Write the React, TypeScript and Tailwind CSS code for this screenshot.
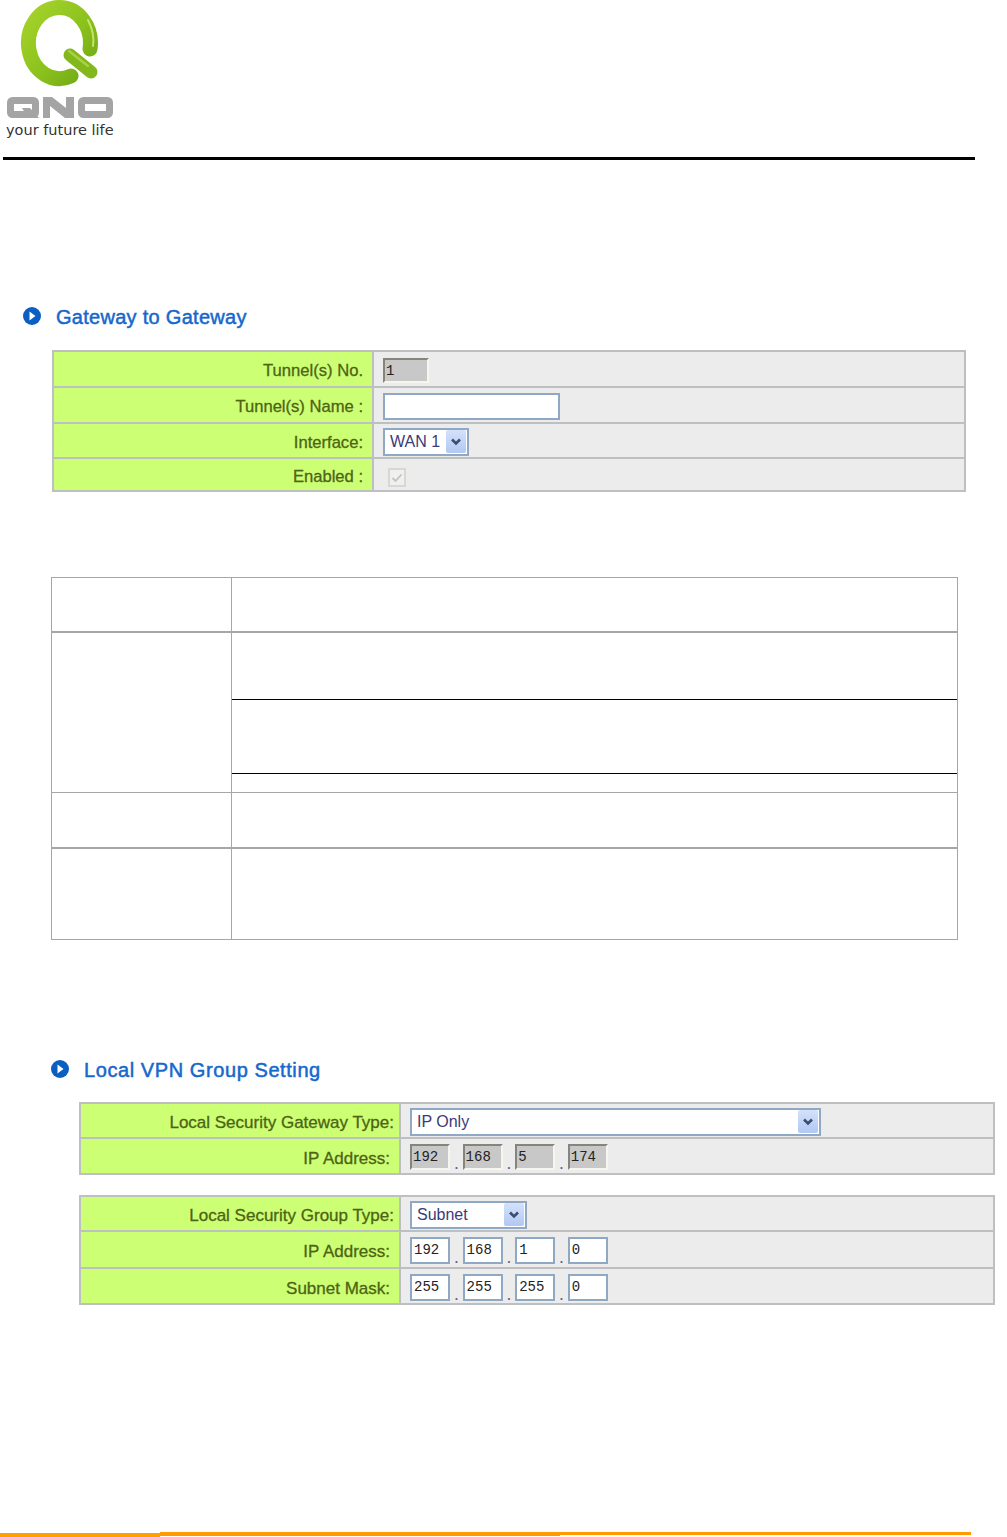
import type { ReactNode } from "react";

const sans = "font-['Liberation_Sans',Arial,sans-serif]";

const Logo = () => (
  <div className="h-[140px] shrink-0">
    <svg width="120" height="120" viewBox="0 0 120 120" className="block">
      <defs>
        <linearGradient id="ring" x1="0" y1="0" x2="1" y2="1">
          <stop offset="0" stopColor="#a6d22c" />
          <stop offset="0.55" stopColor="#8cc21c" />
          <stop offset="1" stopColor="#6fa816" />
        </linearGradient>
      </defs>
      <path d="M90 49 A31 35.5 0 1 0 71 76" fill="none" stroke="url(#ring)" strokeWidth="15" strokeLinecap="round" />
      <path d="M88 20 Q95 34 93 46" fill="none" stroke="#c5e26c" strokeWidth="2" strokeLinecap="round" />
      <path d="M70 55 L91 72" fill="none" stroke="#82b81c" strokeWidth="13" strokeLinecap="round" />
      <path d="M69 51 L88 66" fill="none" stroke="#a9d243" strokeWidth="2.5" strokeLinecap="round" />
      {/* QNO mark */}
      <g fill="none" stroke="#a4a4a4" strokeWidth="7">
        <rect x="10.5" y="100.5" width="25" height="14" rx="2" />
        <rect x="81.5" y="100.5" width="28" height="14" rx="2" />
      </g>
      <path d="M43 118 V97 H52 L66 108 V97 H74 V118 H65 L50 106 V118 Z" fill="#a4a4a4" />
      <path d="M22 108 H30 L39 118 H28 Z" fill="#a4a4a4" />
    </svg>
    <div className="mt-[1px] ml-[6px] font-['DejaVu_Sans',sans-serif] text-[14.5px] leading-[18px] whitespace-nowrap text-[#333]">
      your future life
    </div>
  </div>
);

const BulletIcon = () => (
  <svg width="18" height="18" viewBox="0 0 18 18" className="block shrink-0">
    <circle cx="9" cy="9" r="9" fill="#0b5fc0" />
    <path d="M6.5 4.5 L12.5 9 L6.5 13.5 Z" fill="#fff" />
  </svg>
);

const Chevron = () => (
  <svg width="12" height="8" viewBox="0 0 12 8" className="block">
    <path d="M2 1.5 L6 5.5 L10 1.5" fill="none" stroke="#3a4d70" strokeWidth="2.6" />
  </svg>
);

const SectionTitle = ({ title, className, spacing }: { title: string; className: string; spacing: string }) => (
  <div className={`flex h-[20px] items-start gap-[15px] ${className}`}>
    <BulletIcon />
    <span className={`${sans} text-[20px] leading-[20px] font-medium whitespace-nowrap text-[#1668cc] [-webkit-text-stroke:0.5px_#1668cc] ${spacing}`}>{title}</span>
  </div>
);

const Row = ({
  label,
  height,
  labelClass,
  last,
  children,
}: {
  label: string;
  height: string;
  labelClass: string;
  last?: boolean;
  children: ReactNode;
}) => (
  <div className={`flex ${height} ${last ? "" : "border-b-2 border-[#bcc0c3]"}`}>
    <div className={`flex w-[320px] shrink-0 items-center justify-end border-r-2 border-[#bcc0c3] bg-[#ccff73] pt-[5px] ${sans} text-[#4d6414] [-webkit-text-stroke:0.3px_#4d6414] ${labelClass}`}>
      {label}
    </div>
    <div className="flex flex-1 items-center bg-[#ececec] pl-[9px]">{children}</div>
  </div>
);

const TextBox = ({ value, className }: { value?: string; className: string }) => (
  <div className={`flex items-start border-2 border-[#8fa9c4] bg-white pl-[2px] font-['Liberation_Mono',monospace] text-[14px] leading-[23px] text-[#222] ${className}`}>
    {value}
  </div>
);

const ReadOnlyBox = ({ value, className }: { value: string; className: string }) => (
  <div className={`flex items-start border-2 border-t-[#85857c] border-l-[#85857c] border-r-[#f6f6ee] border-b-[#f6f6ee] bg-[#c8c8c8] pl-[1px] font-['Liberation_Mono',monospace] text-[14px] leading-[23px] text-[#222] ${className}`}>
    {value}
  </div>
);

const Select = ({ value, className }: { value: string; className: string }) => (
  <div className={`mt-[2px] flex h-[28px] items-center justify-between border-2 border-[#8fa9c4] bg-white pr-[1px] pl-[5px] ${sans} text-[16px] text-[#3c3a78] ${className}`}>
    <span className="pt-[1px]">{value}</span>
    <div className="flex h-[23px] w-[20px] items-center justify-center rounded-[2px] bg-gradient-to-b from-[#d4e1fb] to-[#b1c8f3]">
      <Chevron />
    </div>
  </div>
);

const IpFields = ({ values, disabled }: { values: string[]; disabled?: boolean }) => (
  <div className="mt-[2px] flex items-end">
    {values.map((v, i) => (
      <div key={i} className="flex items-end">
        {i > 0 && <span className={`w-[12.6px] text-center ${sans} text-[12px] leading-[10px] font-bold text-[#6a5a8a]`}>.</span>}
        {disabled ? (
          <ReadOnlyBox value={v} className="h-[26px] w-[40px]" />
        ) : (
          <TextBox value={v} className="h-[27px] w-[40px]" />
        )}
      </div>
    ))}
  </div>
);

const DocRow = ({ height, className, children }: { height: string; className?: string; children?: ReactNode }) => (
  <div className={`flex ${height} ${className ?? ""}`}>
    <div className="w-[180px] shrink-0 border-r border-[#a6a6a6]" />
    <div className="flex flex-1 flex-col">{children}</div>
  </div>
);

export default function App() {
  return (
    <div className="flex h-[1537px] w-[1007px] flex-col overflow-hidden bg-white">
      <Logo />
      <div className="mt-[17px] ml-[3px] h-[3px] w-[972px] shrink-0 bg-black" />

      <SectionTitle title="Gateway to Gateway" spacing="tracking-[0.28px]" className="mt-[147px] ml-[23px]" />

      {/* tunnel table */}
      <div className="mt-[23px] ml-[52px] w-[914px] border-2 border-[#bcc0c3]">
        <Row label="Tunnel(s) No." height="h-[36px]" labelClass="pr-[9px] text-[16.6px]">
          <ReadOnlyBox value="1" className="mt-[2px] h-[25px] w-[46px]" />
        </Row>
        <Row label="Tunnel(s) Name :" height="h-[36px]" labelClass="pr-[9px] text-[16.6px]">
          <TextBox className="mt-[3px] h-[27px] w-[177px]" />
        </Row>
        <Row label="Interface:" height="h-[35px]" labelClass="pr-[9px] text-[16.6px]">
          <Select value="WAN 1" className="w-[86px]" />
        </Row>
        <Row label="Enabled :" height="h-[31px]" labelClass="pr-[9px] text-[16.6px]" last>
          <div className="mt-[6px] ml-[5px] flex h-[19px] w-[18px] items-center justify-center border-2 border-[#d8d8d2] bg-[#f0f0f0]">
            <svg width="12" height="10" viewBox="0 0 12 10" className="block">
              <path d="M1.5 5 L4.5 8 L10.5 1.5" fill="none" stroke="#c2c2c2" strokeWidth="1.8" />
            </svg>
          </div>
        </Row>
      </div>

      {/* empty explanation table */}
      <div className="mt-[85px] ml-[51px] w-[907px] border border-[#a6a6a6]">
        <DocRow height="h-[55px]" className="border-b-2 border-[#a6a6a6]" />
        <DocRow height="h-[160px]" className="border-b border-[#a6a6a6]">
          <div className="h-[67px] border-b border-black" />
          <div className="h-[74px] border-b border-black" />
        </DocRow>
        <DocRow height="h-[56px]" className="border-b-2 border-[#a6a6a6]" />
        <DocRow height="h-[90px]" />
      </div>

      <SectionTitle title="Local VPN Group Setting" spacing="tracking-[0.58px]" className="mt-[120px] ml-[51px]" />

      {/* local gateway */}
      <div className="mt-[22px] ml-[79px] w-[916px] border-2 border-[#bcc0c3]">
        <Row label="Local Security Gateway Type:" height="h-[35px]" labelClass="pr-[5px] text-[17px]">
          <Select value="IP Only" className="w-[411px]" />
        </Row>
        <Row label="IP Address:" height="h-[34px]" labelClass="pr-[9px] text-[17px]" last>
          <IpFields values={["192", "168", "5", "174"]} disabled />
        </Row>
      </div>

      {/* local group */}
      <div className="mt-[20px] ml-[79px] w-[916px] border-2 border-[#bcc0c3]">
        <Row label="Local Security Group Type:" height="h-[35px]" labelClass="pr-[5px] text-[17px]">
          <Select value="Subnet" className="w-[117px]" />
        </Row>
        <Row label="IP Address:" height="h-[37px]" labelClass="pr-[9px] text-[17px]">
          <IpFields values={["192", "168", "1", "0"]} />
        </Row>
        <Row label="Subnet Mask:" height="h-[34px]" labelClass="pr-[9px] text-[17px]" last>
          <IpFields values={["255", "255", "255", "0"]} />
        </Row>
      </div>

      {/* footer rule */}
      <div className="mt-auto flex h-[5px] w-[971px] items-start">
        <div className="mt-[1px] h-[4px] w-[160px] bg-[#ff9f00]" />
        <div className="h-[4px] w-[400px] bg-[#ff9a00]" />
        <div className="h-[3px] flex-1 bg-[#ff9a00]" />
      </div>
    </div>
  );
}
